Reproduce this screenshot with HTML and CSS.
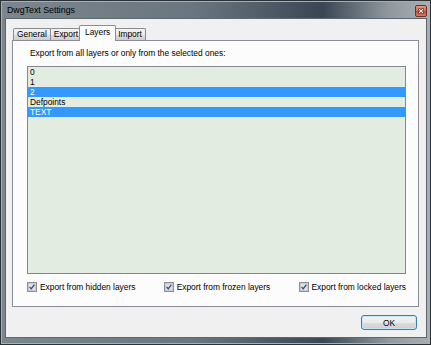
FILE: index.html
```html
<!DOCTYPE html>
<html lang="en">
  <head>
    <meta charset="UTF-8" />
    <title>DwgText Settings</title>
    <link rel="stylesheet" href="styles.css" />
  </head>
  <body>
    <div class="window">
      <header class="titlebar">
        <span class="title">DwgText Settings</span>
        <button class="close" title="Close">
          <svg width="12" height="12" viewBox="0 0 12 12">
            <path d="M4 4 L8 8 M8 4 L4 8" stroke="#5a1f16" stroke-width="3" stroke-linecap="round" fill="none" />
            <path d="M4 4 L8 8 M8 4 L4 8" stroke="#f4f4f4" stroke-width="1.5" stroke-linecap="round" fill="none" />
          </svg>
        </button>
      </header>

      <main class="client">
        <nav class="tabs">
          <div class="tab">General</div>
          <div class="tab">Export</div>
          <div class="tab active">Layers</div>
          <div class="tab">Import</div>
        </nav>

        <section class="panel">
          <p class="hint">Export from all layers or only from the selected ones:</p>
          <ul class="layer-list">
            <li>0</li>
            <li>1</li>
            <li class="selected">2</li>
            <li>Defpoints</li>
            <li class="selected">TEXT</li>
          </ul>

          <div class="options">
            <label class="check">
              <svg class="box" width="10" height="10" viewBox="0 0 10 10">
                <rect x="0.5" y="0.5" width="9" height="9" fill="#f6f6f6" stroke="#8e8f8f" />
                <rect x="1.5" y="1.5" width="7" height="7" fill="#dfe3e8" stroke="#c6cbd2" />
                <path d="M2.6 4.9 L4.2 6.9 L7.4 2.6" stroke="#3a4f8e" stroke-width="1.4" fill="none" />
              </svg>
              Export from hidden layers
            </label>
            <label class="check">
              <svg class="box" width="10" height="10" viewBox="0 0 10 10">
                <rect x="0.5" y="0.5" width="9" height="9" fill="#f6f6f6" stroke="#8e8f8f" />
                <rect x="1.5" y="1.5" width="7" height="7" fill="#dfe3e8" stroke="#c6cbd2" />
                <path d="M2.6 4.9 L4.2 6.9 L7.4 2.6" stroke="#3a4f8e" stroke-width="1.4" fill="none" />
              </svg>
              Export from frozen layers
            </label>
            <label class="check">
              <svg class="box" width="10" height="10" viewBox="0 0 10 10">
                <rect x="0.5" y="0.5" width="9" height="9" fill="#f6f6f6" stroke="#8e8f8f" />
                <rect x="1.5" y="1.5" width="7" height="7" fill="#dfe3e8" stroke="#c6cbd2" />
                <path d="M2.6 4.9 L4.2 6.9 L7.4 2.6" stroke="#3a4f8e" stroke-width="1.4" fill="none" />
              </svg>
              Export from locked layers
            </label>
          </div>
        </section>

        <div class="buttons">
          <button class="ok">OK</button>
        </div>
      </main>
    </div>
  </body>
</html>
```

FILE: styles.css
```css
/* Reset */
* {
  margin: 0;
  padding: 0;
  box-sizing: border-box;
}

body {
  width: 431px;
  height: 345px;
  overflow: hidden;
  font-family: "Liberation Sans", Arial, sans-serif;
  font-size: 8.4px;
  color: #000;
  background: #2f373c;
}

/* Window frame */
.window {
  width: 431px;
  height: 345px;
  padding: 0 4px 7px 5px;
  background: linear-gradient(90deg, #7b868e 0%, #6a767f 45%, #3a4753 75%, #8f989e 90%, #a9b0b4 100%);
  box-shadow: inset 0 0 0 1px #2b3237, inset 0 0 0 2px #a8afb4;
}

.titlebar {
  height: 18px;
  display: flex;
  align-items: center;
  justify-content: space-between;
  padding: 0 0 0 2px;
}

.title {
  font-size: 8.8px;
  color: #000;
  margin-top: 2px;
}

.close {
  width: 12px;
  height: 12px;
  margin: 3px 0 0 0;
  border: 1px solid #6b3328;
  border-radius: 2px;
  background: linear-gradient(#e49a86, #d06a52 50%, #c04a32 51%, #d87b5c);
  display: flex;
  align-items: center;
  justify-content: center;
}

/* Client area */
.client {
  height: 320px;
  background: #f0f0f0;
  border: 1px solid #5d676f;
  padding: 6px 0 0 0;
}

/* Tabs */
.tabs {
  display: flex;
  align-items: flex-end;
  height: 15px;
  margin-left: 7px;
  position: relative;
  z-index: 1;
}

.tab {
  height: 12px;
  padding: 0 3px;
  line-height: 11px;
  border: 1px solid #898c95;
  border-bottom: none;
  border-radius: 2px 2px 0 0;
  background: linear-gradient(#f3f3f3, #ebebeb 50%, #dddddd 51%, #cfcfcf);
  margin-right: -1px;
}

.tab.active {
  height: 16px;
  margin: 0 -2px -1px -2px;
  padding: 0 5px;
  line-height: 13px;
  background: #fcfcfc;
  position: relative;
  z-index: 2;
}

/* Tab panel */
.panel {
  height: 267px;
  margin: 0 7px 0 6px;
  border: 1px solid #898c95;
  background: #fcfcfc;
  padding: 7px 0 0 14px;
}

.hint {
  line-height: 10px;
  padding-left: 3px;
  margin-bottom: 8px;
}

.layer-list {
  list-style: none;
  width: 379px;
  height: 208px;
  border: 1px solid #828790;
  background: #e3ece0;
}

.layer-list li {
  height: 10px;
  line-height: 10px;
  padding-left: 2px;
}

.layer-list li.selected {
  background: #3399ff;
  color: #fff;
}

.options {
  width: 379px;
  margin-top: 8px;
  display: flex;
  justify-content: space-between;
}

.check {
  display: flex;
  align-items: center;
  gap: 3px;
  line-height: 10px;
}

.box {
  display: block;
  flex: none;
}

/* Buttons */
.buttons {
  display: flex;
  justify-content: flex-end;
  padding: 8px 9px 0 0;
}

.ok {
  width: 56px;
  height: 15px;
  font-family: "Liberation Sans", Arial, sans-serif;
  font-size: 8.4px;
  color: #000;
  border: 1px solid #3c7fb1;
  border-radius: 3px;
  background: linear-gradient(#f2f2f2, #ebebeb 50%, #dddddd 51%, #cfcfcf);
  box-shadow: inset 0 0 0 1px #c4e5f6;
}
```
